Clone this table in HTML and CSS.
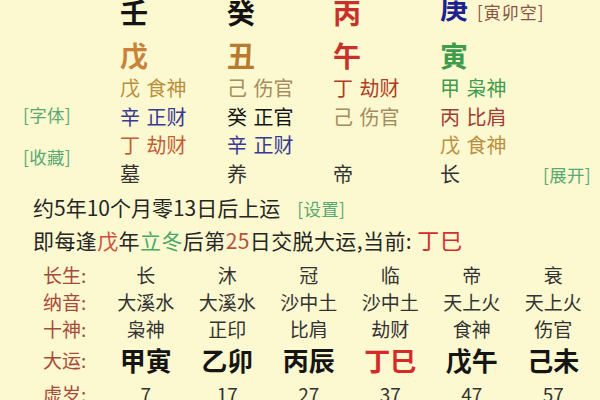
FILE: index.html
```html
<!DOCTYPE html>
<html lang="zh-CN">
<head>
<meta charset="utf-8">
<title>八字排盘</title>
<link rel="stylesheet" href="styles.css">
</head>
<body>
<div class="page">
  <div class="pillars">
    <div class="side">
      <span class="btn">[字体]</span>
      <span class="btn">[收藏]</span>
    </div>

    <div class="big k">壬</div>
    <div class="big k">癸</div>
    <div class="big red">丙</div>
    <div class="big blue">庚<span class="kong">[寅卯空]</span></div>
    <div></div>

    <div class="big orange">戊</div>
    <div class="big brown">丑</div>
    <div class="big red">午</div>
    <div class="big green">寅</div>
    <div></div>

    <div class="sm gold">戊 食神</div>
    <div class="sm tan">己 伤官</div>
    <div class="sm rust">丁 劫财</div>
    <div class="sm green">甲 枭神</div>
    <div></div>

    <div class="sm navy">辛 正财</div>
    <div class="sm k">癸 正官</div>
    <div class="sm tan">己 伤官</div>
    <div class="sm maroon">丙 比肩</div>
    <div></div>

    <div class="sm ember">丁 劫财</div>
    <div class="sm navy">辛 正财</div>
    <div></div>
    <div class="sm gold">戊 食神</div>
    <div></div>

    <div class="sm dark">墓</div>
    <div class="sm dark">养</div>
    <div class="sm dark">帝</div>
    <div class="sm dark">长</div>
    <div class="sm"><span class="btn">[展开]</span></div>
  </div>

  <div class="lines">
    <p class="line">约5年10个月零13日后上运<span class="btn set">[设置]</span></p>
    <p class="line wide">即每逢<span class="hl-red">戊</span>年<span class="hl-green">立冬</span>后第<span class="hl-num">25</span>日交脱大运,当前: <span class="cur">丁巳</span></p>
  </div>

  <div class="table">
    <div class="lbl">长生:</div>
    <div class="v">长</div><div class="v">沐</div><div class="v">冠</div><div class="v">临</div><div class="v">帝</div><div class="v">衰</div>

    <div class="lbl">纳音:</div>
    <div class="v">大溪水</div><div class="v">大溪水</div><div class="v">沙中土</div><div class="v">沙中土</div><div class="v">天上火</div><div class="v">天上火</div>

    <div class="lbl">十神:</div>
    <div class="v">枭神</div><div class="v">正印</div><div class="v">比肩</div><div class="v">劫财</div><div class="v">食神</div><div class="v">伤官</div>

    <div class="lbl">大运:</div>
    <div class="v dy">甲寅</div><div class="v dy">乙卯</div><div class="v dy">丙辰</div><div class="v dy now">丁巳</div><div class="v dy">戊午</div><div class="v dy">己未</div>

    <div class="lbl">虚岁:</div>
    <div class="v num">7</div><div class="v num">17</div><div class="v num">27</div><div class="v num">37</div><div class="v num">47</div><div class="v num">57</div>
  </div>
</div>
</body>
</html>
```

FILE: styles.css
```css
html, body {
  margin: 0;
  padding: 0;
}

body {
  width: 600px;
  height: 400px;
  overflow: hidden;
  background: #fcf8d0;
  font-family: "Noto Sans CJK SC", "Noto Sans", sans-serif;
  color: #2a2a2a;
}

.page {
  width: 600px;
}

/* ---------- four pillars ---------- */
.pillars {
  display: grid;
  grid-template-columns: 120px 107px 106px 107px 103px 1fr;
  grid-template-rows: 24px 43px 35.5px 28.5px 28.5px 28.5px;
  align-items: end;
  white-space: nowrap;
}

.side {
  grid-column: 1;
  grid-row: 1 / 7;
  align-self: stretch;
  padding: 105px 0 0 23px;
  display: flex;
  flex-direction: column;
  align-items: flex-start;
  gap: 22px;
}

.btn {
  color: #5aa872;
  font-size: 17.5px;
  line-height: 20px;
  font-weight: 400;
  letter-spacing: 0.3px;
}

.big {
  font-size: 28px;
  line-height: 24px;
  font-weight: 700;
}

.sm {
  font-size: 20px;
  line-height: 28.5px;
  word-spacing: 2px;
}

.kong {
  font-size: 17px;
  font-weight: 400;
  color: #8a5444;
  letter-spacing: 1px;
  margin-left: 9px;
}

.k { color: #141414; }
.dark { color: #333333; }
.red { color: #c8302a; }
.blue { color: #1e2290; }
.orange { color: #c8823a; }
.brown { color: #b87a2e; }
.green { color: #3e9c4c; }
.gold { color: #b98f3e; }
.tan { color: #a48c5c; }
.rust { color: #b03e24; }
.navy { color: #3a3a94; }
.maroon { color: #a43c34; }
.ember { color: #c45c36; }

/* ---------- text lines ---------- */
.lines {
  margin-top: 3px;
}

.line {
  margin: 0;
  padding-left: 33px;
  font-size: 21px;
  line-height: 32px;
  color: #262626;
  white-space: nowrap;
}

.line.wide {
  letter-spacing: 0.4px;
}

.set {
  margin-left: 17px;
}

.hl-red { color: #cf4f3a; }
.hl-green { color: #4aa86a; }
.hl-num { color: #b8503c; }

.cur {
  color: #d62c2c;
  font-size: 22px;
  letter-spacing: 1px;
}

/* ---------- table ---------- */
.table {
  margin-top: 4.5px;
  display: grid;
  grid-template-columns: 105px repeat(6, 81.5px);
  grid-template-rows: 27px 27px 27px 35px 33px;
  align-items: center;
  white-space: nowrap;
}

.lbl {
  padding-left: 43px;
  font-size: 19px;
  color: #a84a3a;
}

.v {
  text-align: center;
  font-size: 19px;
  color: #333333;
}

.dy {
  font-size: 26px;
  font-weight: 700;
  color: #151515;
}

.dy.now {
  color: #d62a2a;
}

.num {
  font-size: 19px;
}
```
